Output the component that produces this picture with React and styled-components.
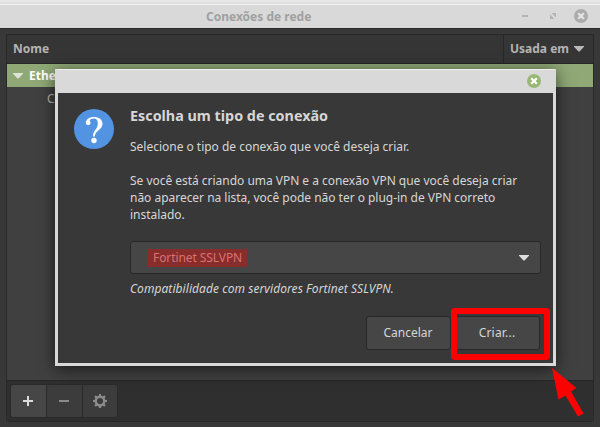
import React from "react";
import styled, { createGlobalStyle } from "styled-components";

const Global = createGlobalStyle`
  * { box-sizing: border-box; }
  body {
    margin: 0;
    overflow: hidden;
    background: #383838;
    font: 12px/17px "Noto Sans", sans-serif;
    color: #d6d6d6;
  }
`;

const Desktop = styled.div`
  position: relative;
  width: 600px;
  height: 427px;
  display: flex;
  flex-direction: column;
  overflow: hidden;
  background: #383838;
`;

const Backdrop = styled.div`
  height: 4px;
  background: linear-gradient(#e9e9e9, #dedede);
`;

const TitleBar = styled.header`
  height: 25px;
  display: grid;
  grid-template-columns: 196px 106px 1fr;
  align-items: center;
  background: #d9d9d9;
  border-top: 1px solid #f2f2f2;
  border-bottom: 1px solid #282828;
  padding: 0 12px 0 10px;
`;

const WindowTitle = styled.h1`
  grid-column: 2;
  margin: 0;
  font-size: 12px;
  line-height: 17px;
  color: #a0a0a0;
  white-space: nowrap;
`;

const WindowControls = styled.div`
  display: flex;
  justify-content: flex-end;
  align-items: center;
  gap: 18px;
  padding-bottom: 1px;
`;

const Content = styled.main`
  flex: 1;
  display: flex;
  margin: 5px 6px 5px;
  border: 1px solid #282828;
  border-radius: 0 0 3px 3px;
  flex-direction: column;
  background: #404040;
`;

const ColumnHeader = styled.div`
  height: 29px;
  display: flex;
  background: #353535;
  border-bottom: 1px solid #262626;
  font-weight: 700;
  color: #b4b4b4;
`;

const Column = styled.div`
  display: flex;
  align-items: center;
  gap: 5px;
  flex: ${(p) => (p.$width ? `0 0 ${p.$width}px` : 1)};
  padding: 0 6px 2px;
  border-left: ${(p) => (p.$width ? "1px solid #282828" : "0")};

  svg {
    margin-top: 2px;
  }
`;

const GroupRow = styled.div`
  height: 23px;
  display: flex;
  align-items: center;
  gap: 6px;
  padding-left: 6px;
  font-weight: 700;
  color: #fff;
  background: #8fa876;
`;

const ItemRow = styled.div`
  height: 23px;
  padding: 3px 0 0 40px;
  color: #b4b4b4;
`;

const ListArea = styled.div`
  flex: 1;
`;

const Toolbar = styled.div`
  height: 41px;
  padding: 3px;
  display: flex;
  background: #2f2f2f;
  border-top: 1px solid #262626;
`;

const ToolGroup = styled.div`
  display: flex;
  height: 34px;
  border: 1px solid #2a2a2a;
  border-radius: 3px;
  overflow: hidden;
`;

const ToolButton = styled.button`
  width: ${(p) => p.$width || 36}px;
  padding: 0 1px 0 0;
  display: flex;
  align-items: center;
  justify-content: center;
  border: 0;
  border-left: ${(p) => (p.$divided ? "1px solid #2a2a2a" : "0")};
  color: ${(p) => (p.disabled ? "#8c8c8c" : "#dcdcdc")};
  background: ${(p) => (p.disabled ? "#3c3c3c" : "#464646")};
`;

const Dialog = styled.section`
  position: absolute;
  left: 55px;
  top: 69px;
  width: 501px;
  height: 297px;
  display: flex;
  flex-direction: column;
  border: 3px solid #d9d9d9;
  border-top: 1px solid #f1f1f1;
  background: #383838;
  box-shadow: 0 3px 15px rgba(0, 0, 0, 0.6);
`;

const DialogBar = styled.div`
  height: 23px;
  flex: none;
  padding: 0 12px 1px 0;
  display: flex;
  align-items: center;
  justify-content: flex-end;
  background: #d9d9d9;
`;

const DialogBody = styled.div`
  flex: 1;
  display: flex;
  gap: 16px;
  padding: 13px 12px 13px 16px;
`;

const QuestionIcon = styled.svg`
  width: 40px;
  height: 40px;
  flex: none;
  margin-top: 3px;
`;

const Message = styled.div`
  flex: 1;
  display: flex;
  flex-direction: column;
`;

const Heading = styled.h2`
  margin: 0 0 12px;
  font-size: 14.35px;
  line-height: 20px;
`;

const Paragraph = styled.p`
  margin: 0;
  white-space: nowrap;
  margin-bottom: 17px;
  letter-spacing: ${(p) => (p.$tight ? "-0.025px" : "-0.015px")};
`;

const Select = styled.div`
  width: 411px;
  height: 33px;
  margin-top: 1px;
  padding: 0 11px 0 16px;
  display: flex;
  align-items: center;
  justify-content: space-between;
  background: #464646;
  border: 1px solid #282828;
  border-radius: 3px;
`;

const Selected = styled.span`
  width: 100px;
  height: 18px;
  margin-top: 1px;
  padding-left: 6px;
  line-height: 17px;
  letter-spacing: -0.08px;
  color: #db7272;
  background: #882c2c;
  white-space: nowrap;
`;

const Hint = styled.p`
  margin: 6px 0 19px;
  font-style: italic;
  letter-spacing: 0.06px;
`;

const Actions = styled.div`
  display: flex;
  justify-content: flex-end;
  padding-right: 1px;
`;

const Button = styled.button`
  width: ${(p) => p.$width}px;
  height: 34px;
  padding: ${(p) => (p.$primary ? "0 0 2px 3px" : "0 1px 2px 0")};
  font: inherit;
  letter-spacing: ${(p) => (p.$primary ? "0.2px" : "0")};
  color: #d6d6d6;
  background: #464646;
  border: 1px solid #282828;
  border-radius: 3px;
`;

const Highlight = styled.div`
  position: absolute;
  left: 451px;
  top: 308px;
  width: 99px;
  height: 52px;
  border: 6px solid #f00;
  border-radius: 4px;
`;

const Arrow = styled.svg`
  position: absolute;
  left: 550px;
  top: 366px;
`;

const Caret = ({ color }) => (
  <svg width="10" height="6" viewBox="0 0 10 6">
    <path d="M0 0h10v.7L5.500 5.500h-1L0 .7z" fill={color} />
  </svg>
);

const CloseIcon = ({ color, cross = "#fff" }) => (
  <svg width="14" height="14" viewBox="0 0 14 14">
    <circle cx="7" cy="7" r="7" fill={color} />
    <path d="m4.200 4.200 5.600 5.600m0-5.600-5.600 5.600" stroke={cross} strokeWidth="2.100" />
  </svg>
);

const GearIcon = () => (
  <svg width="14" height="14" viewBox="0 0 14 14" fill="none" stroke="currentColor">
    <circle cx="7" cy="7" r="4.300" strokeWidth="2.400" />
    {[0, 45, 90, 135, 180, 225, 270, 315].map((a) => (
      <path key={a} d="M7 0v2.400" strokeWidth="2.200" transform={`rotate(${a} 7 7)`} />
    ))}
  </svg>
);

export default function App() {
  return (
    <Desktop>
      <Global />
      <Backdrop />
      <TitleBar>
        <WindowTitle>Conexões de rede</WindowTitle>
        <WindowControls>
          <svg width="34" height="14" viewBox="0 0 34 14" fill="#b3b3b3">
            <path d="M0 6h6v2H0zM29.500 4H34v4.500zM28 5.500 32.500 10H28z" />
          </svg>
          <CloseIcon color="#acacac" cross="#e6e6e6" />
        </WindowControls>
      </TitleBar>
      <Content>
        <ColumnHeader>
          <Column>Nome</Column>
          <Column $width={90}>
            Usada em <Caret color="#b9b9b9" />
          </Column>
        </ColumnHeader>
        <GroupRow>
          <Caret color="#dce4d5" />
          Ethernet
        </GroupRow>
        <ListArea>
          <ItemRow>Conexão cabeada 1</ItemRow>
        </ListArea>
        <Toolbar>
          <ToolGroup>
            <ToolButton $width={35} aria-label="Adicionar">
              <svg width="10" height="10" viewBox="0 0 10 10">
                <path d="M0 5h10M5 0v10" stroke="currentColor" strokeWidth="2" />
              </svg>
            </ToolButton>
            <ToolButton $divided disabled aria-label="Remover">
              <svg width="10" height="10" viewBox="0 0 10 10">
                <path d="M0 5h10" stroke="currentColor" strokeWidth="2" />
              </svg>
            </ToolButton>
            <ToolButton $divided $width={35} disabled aria-label="Configurar">
              <GearIcon />
            </ToolButton>
          </ToolGroup>
        </Toolbar>
      </Content>
      <Dialog role="dialog">
        <DialogBar>
          <CloseIcon color="#99b876" />
        </DialogBar>
        <DialogBody>
          <QuestionIcon viewBox="0 0 40 40">
            <circle cx="20" cy="20" r="20" fill="#5294e2" />
            <path
              d="M12.300 14.500C11.500 10.300 15 8 20 8C25 8 28.500 10.500 28.500 14.800C28.500 18.300 26 20 23.800 22C21.800 23.800 21.100 25 20.800 27.500H19C19 24.700 19.600 23 21.200 21C23 18.800 23.800 17.200 23.800 14.300C23.800 11.200 22.500 9.500 19.700 9.500C17.700 9.500 16.400 10.200 15.800 11.600Z"
              fill="#fff"
            />
            <circle cx="14.200" cy="13.800" r="2.400" fill="#fff" />
            <circle cx="20" cy="31.500" r="2.700" fill="#fff" />
          </QuestionIcon>
          <Message>
            <Heading>Escolha um tipo de conexão</Heading>
            <Paragraph>Selecione o tipo de conexão que você deseja criar.</Paragraph>
            <Paragraph $tight>
              Se você está criando uma VPN e a conexão VPN que você deseja criar
              <br />
              não aparecer na lista, você pode não ter o plug-in de VPN correto
              <br />
              instalado.
            </Paragraph>
            <Select>
              <Selected>Fortinet SSLVPN</Selected>
              <Caret color="#dcdcdc" />
            </Select>
            <Hint>Compatibilidade com servidores Fortinet SSLVPN.</Hint>
            <Actions>
              <Button $width={85}>Cancelar</Button>
              <Button $width={89} $primary>Criar...</Button>
            </Actions>
          </Message>
        </DialogBody>
      </Dialog>
      <Highlight />
      <Arrow width="36" height="52" viewBox="0 0 36 52">
        <path d="M2 2 26.500 22 21 25.500 33.500 47.500 28 50.500 15.500 29.500 8.500 33.500z" fill="#f00" />
      </Arrow>
    </Desktop>
  );
}
